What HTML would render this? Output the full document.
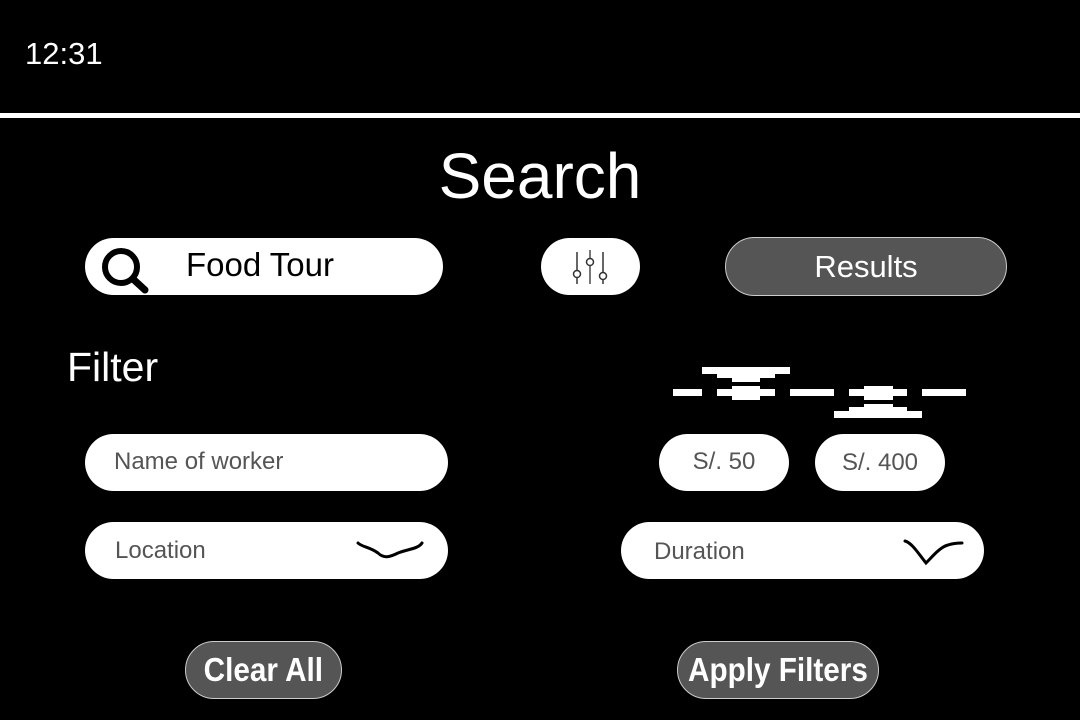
<!DOCTYPE html>
<html><head><meta charset="utf-8"><style>
*{margin:0;padding:0;box-sizing:border-box}
body{width:1080px;height:720px;background:#000;position:relative;overflow:hidden;font-family:"Liberation Sans",sans-serif;color:#fff}
.a{position:absolute}
.pill{position:absolute;background:#fff;border-radius:30px}
.in{color:#555;font-size:24px}
.b{position:absolute;background:#555;border:1px solid #ccc;border-radius:30px;color:#fff;font-size:33px;font-weight:bold;display:flex;align-items:center;justify-content:center}
.b span{display:inline-block;transform:scaleX(.9)}
.r{position:absolute;background:#fff}
</style></head><body>
<div class="a" style="left:25px;top:36px;font-size:31px">12:31</div>
<div class="r" style="left:0;top:113px;width:1080px;height:5px"></div>
<div class="a" style="left:0;width:1080px;top:139px;text-align:center;font-size:64px">Search</div>

<div class="pill" style="left:85px;top:238px;width:358px;height:57px"></div>
<svg class="a" style="left:95px;top:242px" width="60" height="56"><circle cx="26" cy="25" r="16" fill="none" stroke="#000" stroke-width="6"/><line x1="38" y1="37" x2="50" y2="48" stroke="#000" stroke-width="7" stroke-linecap="round"/></svg>
<div class="a" style="left:186px;top:246px;font-size:33px;color:#000">Food Tour</div>

<div class="pill" style="left:541px;top:238px;width:99px;height:57px"></div>
<svg class="a" style="left:565px;top:248px" width="50" height="40"><g stroke="#333" stroke-width="1.5" fill="#fff"><line x1="12" y1="4" x2="12" y2="36"/><line x1="25" y1="2" x2="25" y2="36" stroke="#777" stroke-width="2"/><line x1="38" y1="4" x2="38" y2="36"/><circle cx="12" cy="26" r="3.5"/><circle cx="25" cy="14" r="3.5"/><circle cx="38" cy="28" r="3.5"/></g></svg>

<div class="b" style="left:725px;top:237px;width:282px;height:59px;font-weight:normal;font-size:31px">Results</div>

<div class="a" style="left:67px;top:344px;font-size:41px">Filter</div>

<div class="pill" style="left:85px;top:434px;width:363px;height:57px"></div>
<div class="a in" style="left:114px;top:448px">Name of worker</div>
<div class="pill" style="left:85px;top:522px;width:363px;height:57px"></div>
<div class="a in" style="left:115px;top:537px">Location</div>
<svg class="a" style="left:350px;top:535px" width="80" height="30"><path d="M8 8 C12 12 20 12 28 18 C34 24 40 22 48 18 C58 14 68 14 72 8" fill="none" stroke="#000" stroke-width="3" stroke-linecap="round"/></svg>

<div class="r" style="left:702px;top:367px;width:88px;height:7px"></div>
<div class="r" style="left:717px;top:374px;width:58px;height:4px"></div>
<div class="r" style="left:732px;top:378px;width:28px;height:4px"></div>
<div class="r" style="left:673px;top:389px;width:29px;height:7px"></div>
<div class="r" style="left:717px;top:389px;width:58px;height:7px"></div>
<div class="r" style="left:732px;top:386px;width:28px;height:14px"></div>
<div class="r" style="left:790px;top:389px;width:44px;height:7px"></div>
<div class="r" style="left:849px;top:389px;width:58px;height:7px"></div>
<div class="r" style="left:864px;top:386px;width:29px;height:14px"></div>
<div class="r" style="left:922px;top:389px;width:44px;height:7px"></div>
<div class="r" style="left:864px;top:404px;width:29px;height:4px"></div>
<div class="r" style="left:849px;top:407px;width:58px;height:4px"></div>
<div class="r" style="left:834px;top:411px;width:88px;height:7px"></div>

<div class="pill" style="left:659px;top:434px;width:130px;height:57px"></div>
<div class="a in" style="left:659px;width:130px;text-align:center;top:448px">S/. 50</div>
<div class="pill" style="left:815px;top:434px;width:130px;height:57px"></div>
<div class="a in" style="left:815px;width:130px;text-align:center;top:449px">S/. 400</div>

<div class="pill" style="left:621px;top:522px;width:363px;height:57px"></div>
<div class="a in" style="left:654px;top:538px">Duration</div>
<svg class="a" style="left:900px;top:535px" width="70" height="36"><path d="M5 6 C12 8 18 18 26 28 C32 22 40 12 48 10 C54 8 58 8 62 8" fill="none" stroke="#000" stroke-width="3" stroke-linecap="round"/></svg>

<div class="b" style="left:185px;top:641px;width:157px;height:58px"><span>Clear All</span></div>
<div class="b" style="left:677px;top:641px;width:202px;height:58px"><span>Apply Filters</span></div>
</body></html>
